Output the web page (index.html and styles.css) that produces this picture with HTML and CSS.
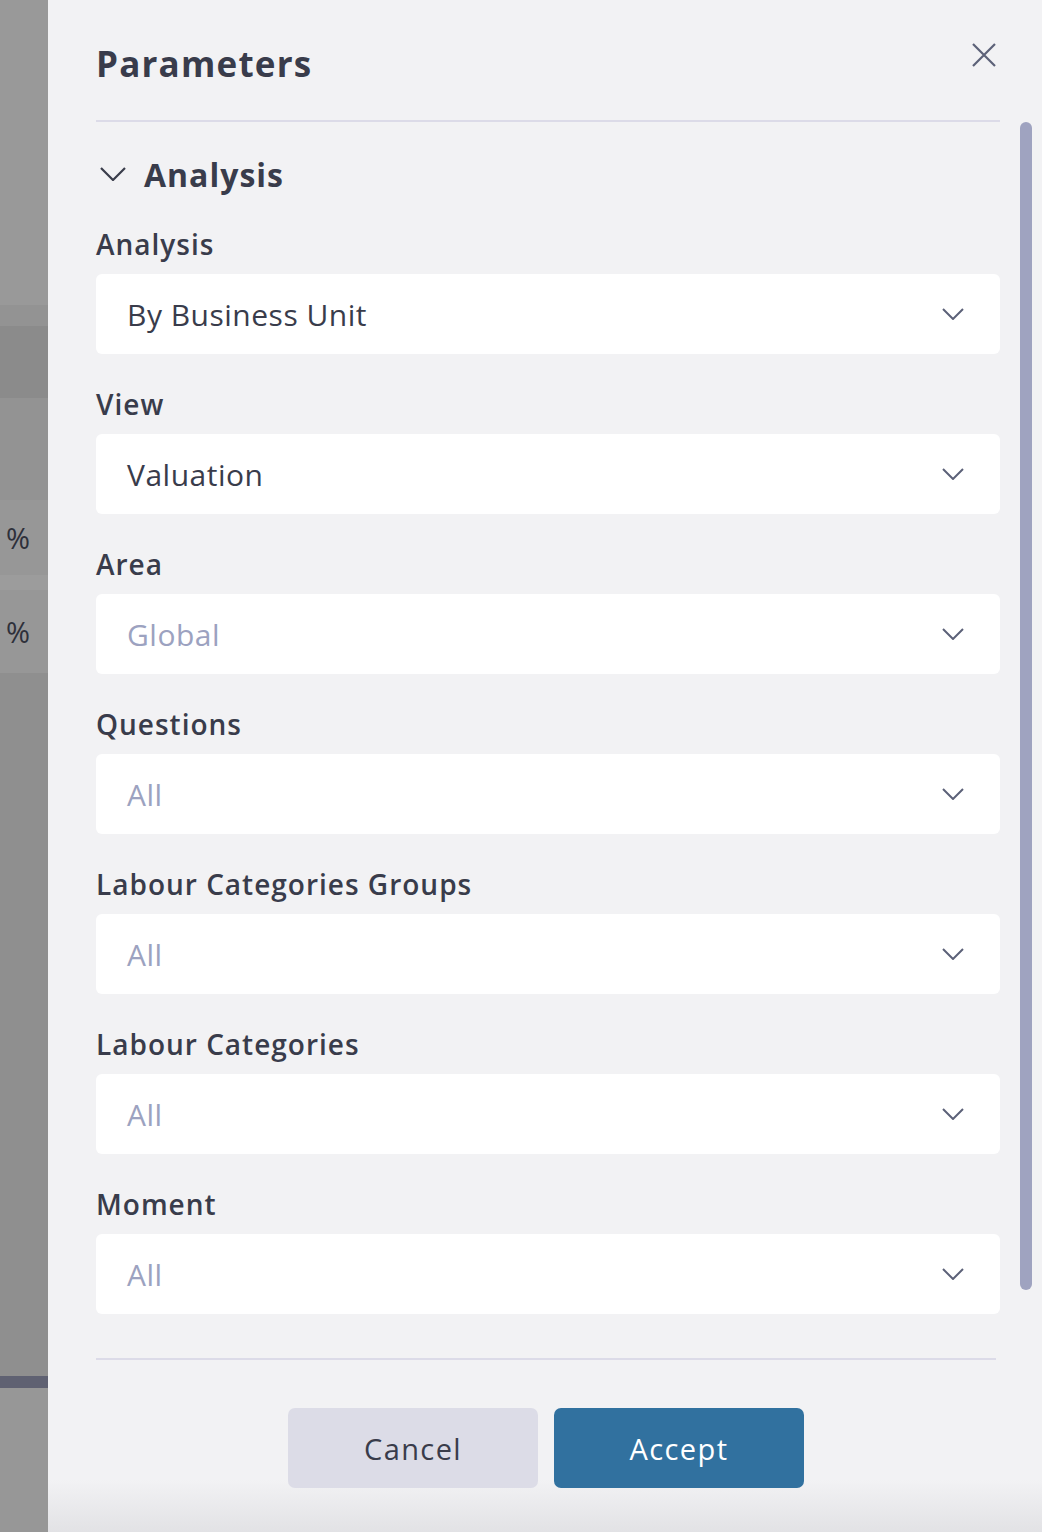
FILE: index.html
```html
<!DOCTYPE html>
<html lang="en">
<head>
  <meta charset="UTF-8">
  <title>Parameters</title>
  <link rel="stylesheet" href="styles.css">
</head>
<body>
  <!-- page behind the drawer, dimmed -->
  <div class="backdrop">
    <div class="bd bd-a"></div>
    <div class="bd bd-b"></div>
    <div class="bd bd-c"></div>
    <div class="bd bd-d"></div>
    <div class="bd bd-e"><span>%</span></div>
    <div class="bd bd-f"></div>
    <div class="bd bd-g"><span>%</span></div>
    <div class="bd bd-h"></div>
    <div class="bd bd-i"></div>
    <div class="bd bd-j"></div>
  </div>

  <aside class="panel">
    <header class="panel-head">
      <h1 class="panel-title">Parameters</h1>
      <button class="close" aria-label="Close">
        <svg viewBox="0 0 24 24" width="24" height="24"><path d="M1 1L23 23M23 1L1 23" fill="none" stroke="#5c6178" stroke-width="2.2"/></svg>
      </button>
    </header>

    <div class="panel-body">
      <div class="section-head">
        <svg class="section-chev" viewBox="0 0 26 14" width="26" height="14"><path d="M1 1L13 13L25 1" fill="none" stroke="#3a3d4b" stroke-width="2.2"/></svg>
        <h2>Analysis</h2>
      </div>

      <div class="field">
        <label>Analysis</label>
        <div class="select"><span>By Business Unit</span><svg viewBox="0 0 22 12" width="22" height="12"><path d="M1 1L11 11L21 1" fill="none" stroke="#5c6178" stroke-width="2"/></svg></div>
      </div>
      <div class="field">
        <label>View</label>
        <div class="select"><span>Valuation</span><svg viewBox="0 0 22 12" width="22" height="12"><path d="M1 1L11 11L21 1" fill="none" stroke="#5c6178" stroke-width="2"/></svg></div>
      </div>
      <div class="field">
        <label>Area</label>
        <div class="select empty"><span>Global</span><svg viewBox="0 0 22 12" width="22" height="12"><path d="M1 1L11 11L21 1" fill="none" stroke="#5c6178" stroke-width="2"/></svg></div>
      </div>
      <div class="field">
        <label>Questions</label>
        <div class="select empty"><span>All</span><svg viewBox="0 0 22 12" width="22" height="12"><path d="M1 1L11 11L21 1" fill="none" stroke="#5c6178" stroke-width="2"/></svg></div>
      </div>
      <div class="field">
        <label>Labour Categories Groups</label>
        <div class="select empty"><span>All</span><svg viewBox="0 0 22 12" width="22" height="12"><path d="M1 1L11 11L21 1" fill="none" stroke="#5c6178" stroke-width="2"/></svg></div>
      </div>
      <div class="field">
        <label>Labour Categories</label>
        <div class="select empty"><span>All</span><svg viewBox="0 0 22 12" width="22" height="12"><path d="M1 1L11 11L21 1" fill="none" stroke="#5c6178" stroke-width="2"/></svg></div>
      </div>
      <div class="field">
        <label>Moment</label>
        <div class="select empty"><span>All</span><svg viewBox="0 0 22 12" width="22" height="12"><path d="M1 1L11 11L21 1" fill="none" stroke="#5c6178" stroke-width="2"/></svg></div>
      </div>
    </div>

    <footer class="panel-foot">
      <button class="btn btn-cancel">Cancel</button>
      <button class="btn btn-accept">Accept</button>
    </footer>

    <div class="scrollbar"></div>
  </aside>
</body>
</html>
```

FILE: styles.css
```css
* {
  box-sizing: border-box;
}
body {
  margin: 0;
  height: 1532px;
  display: flex;
  overflow: hidden;
  font-family: "Open Sans", "Liberation Sans", sans-serif;
  color: #393c4b;
  background: #f2f2f4;
}

/* dimmed page on the left */
.backdrop {
  width: 48px;
  flex: none;
  display: flex;
  flex-direction: column;
  background: #979797;
}
.bd {
  display: flex;
  align-items: center;
  padding-left: 6px;
  font-size: 29px;
  font-weight: 500;
  color: #2e303a;
}
.bd-a { height: 305px; background: #999999; }
.bd-b { height: 21px; background: #939393; }
.bd-c { height: 72px; background: #8b8b8b; }
.bd-d { height: 102px; background: #939393; }
.bd-e { height: 75px; background: #979797; }
.bd-f { height: 15px; background: #9c9c9c; }
.bd-g { height: 83px; background: #979797; }
.bd-h { height: 703px; background: #8f8f8f; }
.bd-i { height: 12px; background: #5f6172; }
.bd-j { flex: 1; background: #979797; }

/* drawer */
.panel {
  position: relative;
  flex: 1;
  display: flex;
  flex-direction: column;
  padding: 0 42px 0 48px;
  background: linear-gradient(to bottom, #f2f2f4 0, #f2f2f4 1480px, #e2e2e5 1532px);
}
.panel-head {
  display: flex;
  align-items: center;
  justify-content: space-between;
  height: 122px;
  padding-top: 6px;
  border-bottom: 2px solid #dcdbe8;
}
.panel-title {
  margin: 0;
  font-size: 35px;
  font-weight: 700;
  letter-spacing: 1.2px;
}
.close {
  border: 0;
  background: none;
  padding: 0;
  margin: -16px 4px 0 0;
  display: flex;
}

.section-head {
  display: flex;
  align-items: center;
  gap: 18px;
  height: 104px;
  padding-left: 4px;
}
.section-head h2 {
  margin: 0;
  font-size: 32px;
  font-weight: 700;
  letter-spacing: 1px;
}

.field {
  display: flex;
  flex-direction: column;
  margin-bottom: 32px;
}
.field label {
  font-size: 28px;
  font-weight: 600;
  line-height: 36px;
  margin-bottom: 12px;
  letter-spacing: 1px;
}
.select {
  height: 80px;
  display: flex;
  align-items: center;
  justify-content: space-between;
  padding: 0 36px 0 31px;
  background: #ffffff;
  border-radius: 6px;
  font-size: 30px;
  letter-spacing: 0.5px;
}
.select.empty {
  color: #9ca2c0;
}

.panel-foot {
  margin-top: 12px;
  border-top: 2px solid #dcdbe8;
  margin-right: 4px;
  display: flex;
  justify-content: center;
  gap: 16px;
  padding: 48px 0 0 0;
}
.btn {
  width: 250px;
  height: 80px;
  border: 0;
  border-radius: 7px;
  font-family: inherit;
  font-size: 29px;
  letter-spacing: 1.4px;
}
.btn-cancel {
  background: #dcdce7;
  color: #393c4b;
}
.btn-accept {
  background: #31719f;
  color: #ffffff;
}

.scrollbar {
  position: absolute;
  left: 972px;
  top: 122px;
  width: 12px;
  height: 1168px;
  border-radius: 6px;
  background: #9fa3c0;
}
```
